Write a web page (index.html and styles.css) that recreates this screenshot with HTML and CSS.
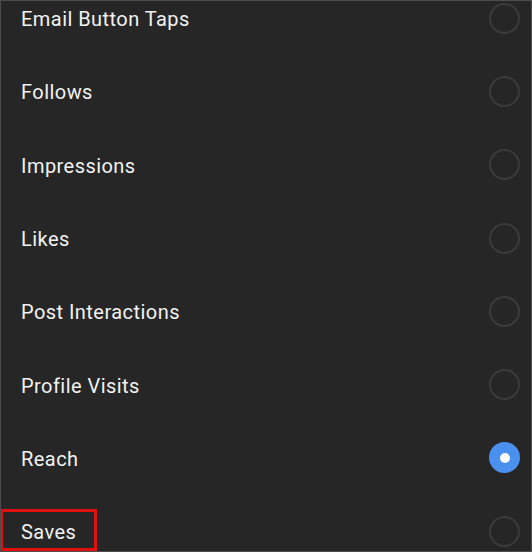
FILE: index.html
```html
<!DOCTYPE html>
<html>
<head>
<meta charset="utf-8">
<link rel="stylesheet" href="styles.css">
</head>
<body>
<div class="screen">
  <ul class="list">
    <li class="row"><span class="label">Email Button Taps</span><span class="radio"></span></li>
    <li class="row"><span class="label">Follows</span><span class="radio"></span></li>
    <li class="row"><span class="label">Impressions</span><span class="radio"></span></li>
    <li class="row"><span class="label">Likes</span><span class="radio"></span></li>
    <li class="row"><span class="label">Post Interactions</span><span class="radio"></span></li>
    <li class="row"><span class="label">Profile Visits</span><span class="radio"></span></li>
    <li class="row"><span class="label">Reach</span><span class="radio selected"></span></li>
    <li class="row highlighted"><span class="label">Saves</span><span class="radio"></span><span class="callout"></span></li>
  </ul>
</div>
</body>
</html>
```

FILE: styles.css
```css
* { box-sizing: border-box; }
html, body { margin: 0; padding: 0; background: #262626; }
.screen {
  width: 532px;
  height: 552px;
  background: #262626;
  border: 1px solid #4d4d4d;
  overflow: hidden;
  position: relative;
}
.list {
  list-style: none;
  margin: -19.5px 0 0 0;
  padding: 0;
}
.row {
  position: relative;
  height: 73.3px;
  display: flex;
  align-items: center;
  justify-content: space-between;
  padding: 0 11px 0 20px;
}
.label {
  font-family: Roboto, "Noto Sans", sans-serif;
  font-size: 20px;
  color: #f2f2f2;
  letter-spacing: 0.45px;
  padding-top: 2px;
}
.radio {
  width: 31px;
  height: 31px;
  border-radius: 50%;
  border: 2px solid #3b3b3b;
  display: flex;
  align-items: center;
  justify-content: center;
}
.radio.selected {
  border: none;
  background: #4a90ee;
}
.radio.selected::after {
  content: "";
  width: 10px;
  height: 10px;
  border-radius: 50%;
  background: #ffffff;
}
.callout {
  position: absolute;
  left: -1px;
  top: 14px;
  width: 97px;
  height: 42px;
  border: 3px solid #e01010;
}
```
